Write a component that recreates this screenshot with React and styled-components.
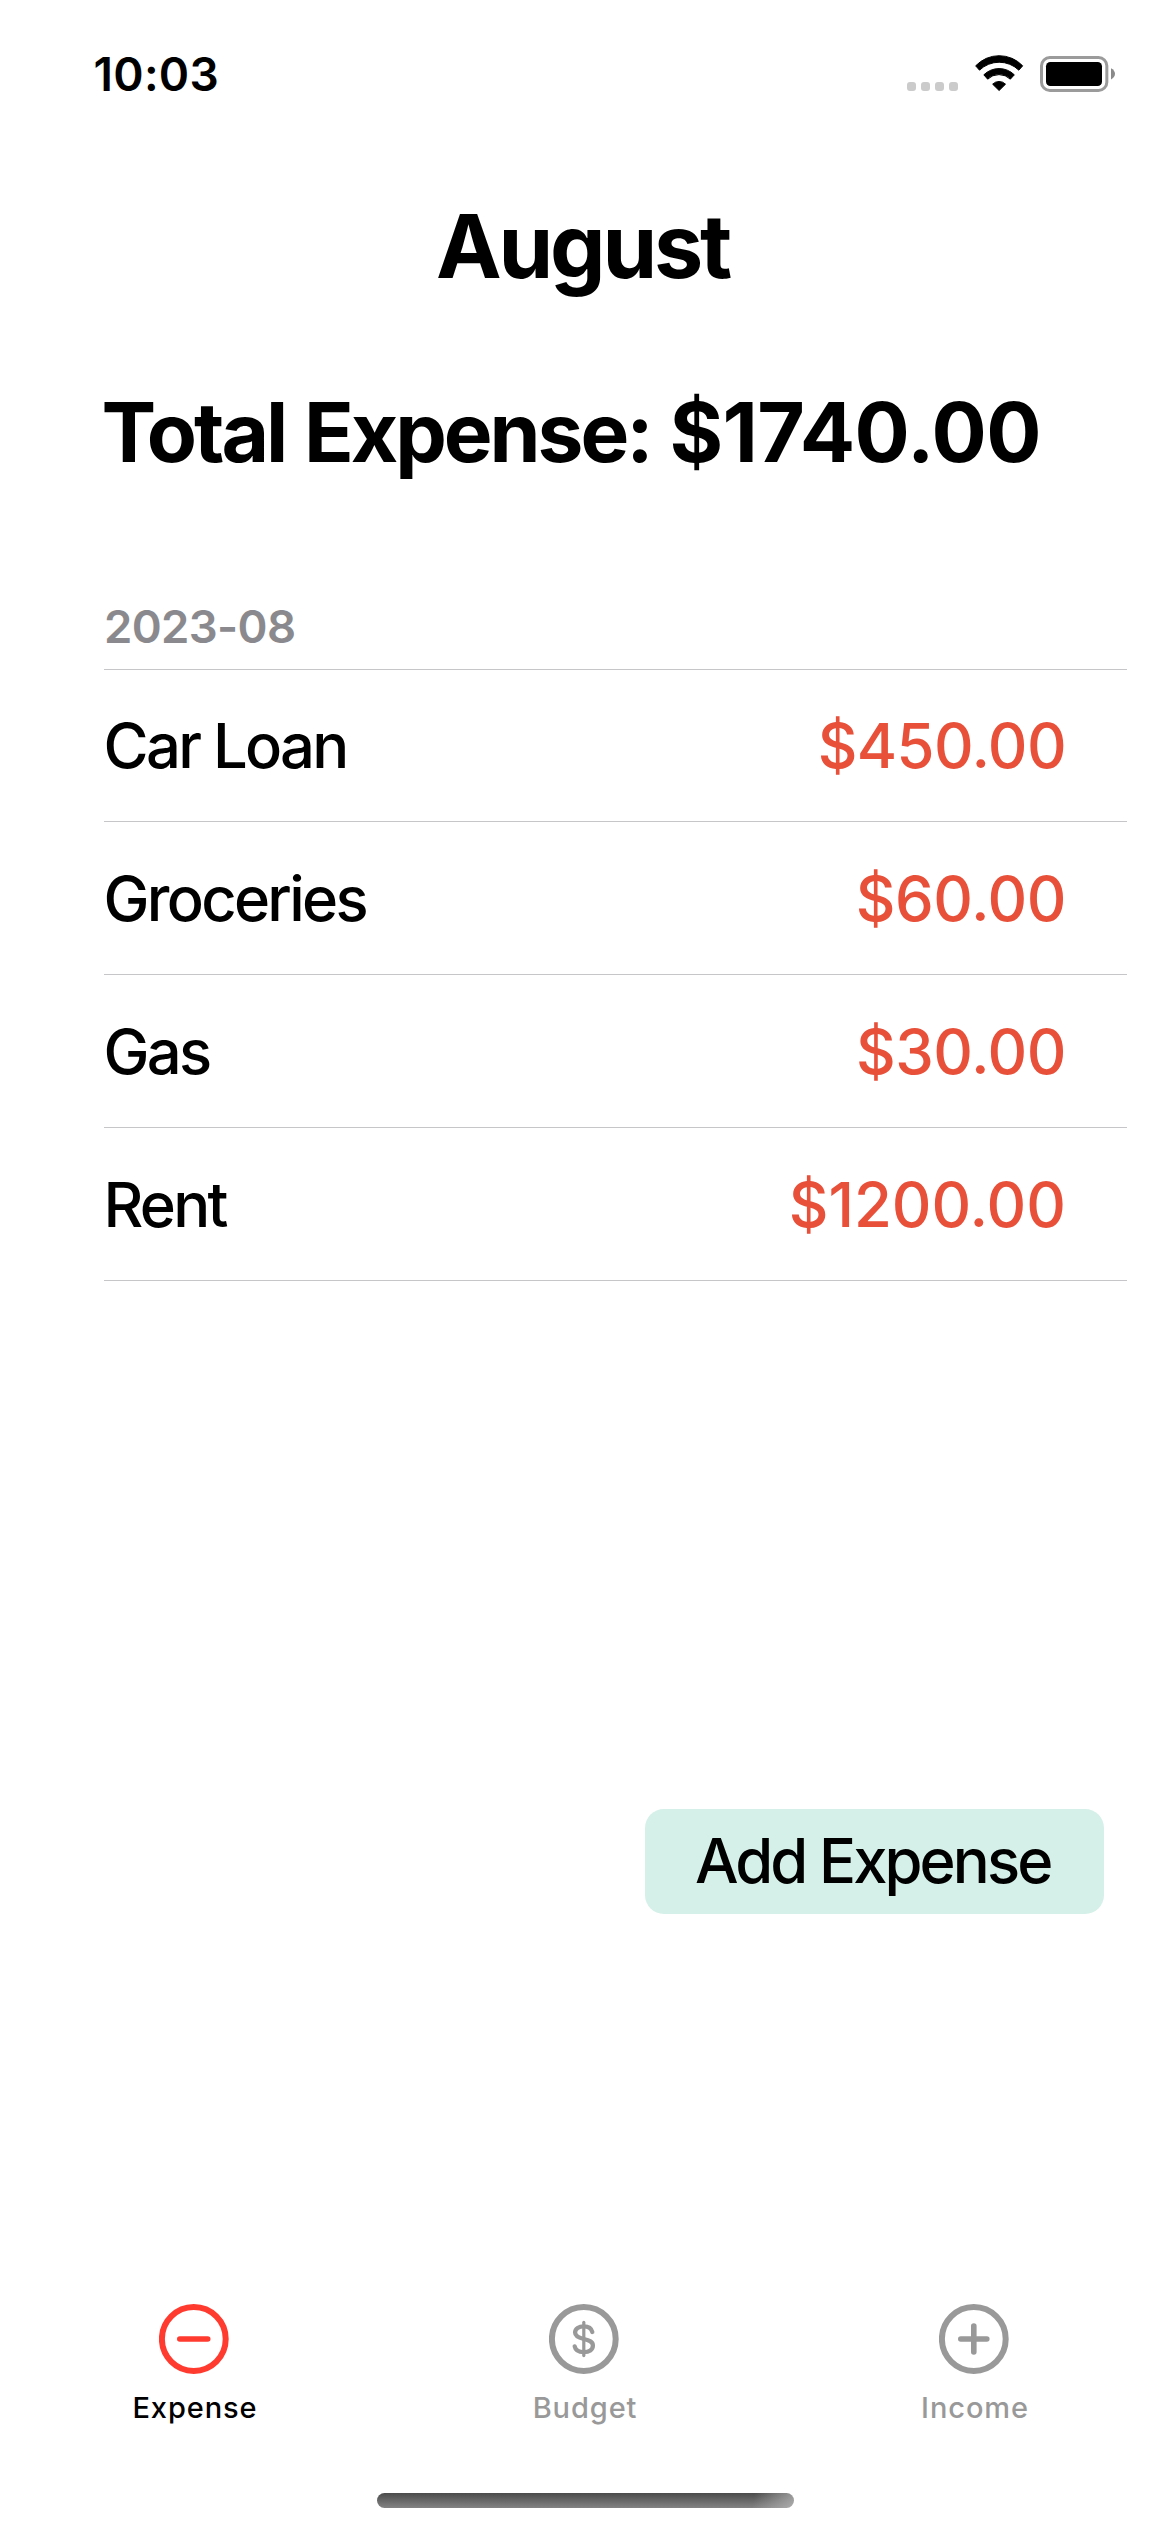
import React from "react";
import styled, { createGlobalStyle } from "styled-components";

const GlobalStyle = createGlobalStyle`
  *, *::before, *::after { box-sizing: border-box; }
  body {
    margin: 0;
    background: #fff;
    color: #000;
    font-family: Inter, "Liberation Sans", sans-serif;
  }
`;

const Screen = styled.div`
  display: flex;
  flex-direction: column;
  width: 1170px;
  height: 2532px;
  overflow: hidden;
  background: #fff;
`;

const StatusBar = styled.header`
  display: flex;
  align-items: center;
  justify-content: space-between;
  height: 148px;
  padding: 0 55px 0 93.5px;
`;

const Clock = styled.time`
  font-size: 46px;
  line-height: 56px;
  font-weight: 600;
  letter-spacing: 0.3px;
`;

const StatusIcons = styled.svg`
  display: block;
  width: 208px;
  height: 38px;
`;

const MonthTitle = styled.h1`
  margin: 0;
  padding-right: 5px;
  font-size: 88px;
  line-height: 196px;
  font-weight: 700;
  letter-spacing: -3.2px;
  text-align: center;
`;

const TotalTitle = styled.h2`
  margin: 0;
  padding-left: 101.5px;
  font-size: 82px;
  line-height: 178px;
  font-weight: 700;
  letter-spacing: -3.05px;
  word-spacing: 2.4px;
  white-space: nowrap;
`;

const TotalAmount = styled.span`
  letter-spacing: -0.55px;
`;

const List = styled.section`
  display: flex;
  flex-direction: column;
  padding: 77px 43px 0 104px;
`;

const ListHeader = styled.h3`
  margin: 0;
  padding-bottom: 14px;
  border-bottom: 1px solid #c6c6c8;
  color: #8a8a8e;
  font-size: 45.5px;
  line-height: 56px;
  font-weight: 600;
  letter-spacing: -0.65px;
`;

const Row = styled.div`
  display: flex;
  align-items: center;
  justify-content: space-between;
  height: 153px;
  padding: 2px 61px 0 0;
  border-bottom: 1px solid #c6c6c8;

  &:first-of-type {
    height: 152px;
    padding-top: 0;
  }
`;

const RowName = styled.span`
  margin-left: -0.5px;
  font-size: 61.5px;
  line-height: 74px;
  font-weight: 500;
  letter-spacing: -2.7px;
`;

const Amount = styled.span`
  color: #e8503a;
  font-size: 61.5px;
  line-height: 74px;
  font-weight: 450;
  letter-spacing: ${({ $tracking }) => $tracking}px;
`;

const Actions = styled.div`
  display: flex;
  flex: 1;
  align-items: flex-start;
  justify-content: flex-end;
  padding: 528px 66px 0 0;
`;

const AddButton = styled.button`
  width: 459px;
  height: 105px;
  padding: 0 0 1px 50px;
  border: 0;
  border-radius: 19px;
  background: #d4f0e8;
  color: #000;
  font-family: inherit;
  font-size: 61.5px;
  line-height: 74px;
  font-weight: 500;
  letter-spacing: -2.9px;
  text-align: left;
  white-space: nowrap;
`;

const TabBar = styled.nav`
  display: grid;
  grid-template-columns: repeat(3, 1fr);
  height: 190px;
`;

const Tab = styled.a`
  display: flex;
  flex-direction: column;
  align-items: center;
  gap: 15px;
  color: ${({ $active }) => ($active ? "#ff3b30" : "#999")};
`;

const TabIcon = styled.svg`
  display: block;
  width: 72px;
  height: 72px;
  fill: none;
  stroke: currentColor;
  stroke-linecap: round;
`;

const TabLabel = styled.span`
  color: ${({ $active }) => ($active ? "#000" : "#999")};
  font-size: 29px;
  line-height: 36px;
  font-weight: 500;
  letter-spacing: 0.9px;
`;

const HomeArea = styled.footer`
  display: flex;
  height: 39px;
  padding-left: 377px;
`;

const HomeIndicator = styled.div`
  width: 417px;
  height: 15px;
  border-radius: 7.5px;
  background:
    linear-gradient(100deg, rgba(190, 190, 190, 0) 90%, rgba(190, 190, 190, 0.7) 100%),
    linear-gradient(180deg, #4b4b4b, #838383);
`;

const expenses = [
  { name: "Car Loan", amount: "$450.00", tracking: -0.6 },
  { name: "Groceries", amount: "$60.00", tracking: -0.45 },
  { name: "Gas", amount: "$30.00", tracking: -0.45 },
  { name: "Rent", amount: "$1200.00", tracking: 0 },
];

const glyphs = {
  minus: <path d="M20.8 36h27.9" strokeWidth="5.6" />,
  dollar: (
    <>
      <path d="M34.8 19.4v33.2" strokeWidth="3.2" />
      <path
        d="M43.3 29C42.4 25.4 39.2 23.4 34.8 23.4C29.9 23.4 26.1 25.8 26.1 29.6C26.1 33.4 29.6 34.8 34.8 36C40.6 37.3 43.9 38.6 43.9 42.6C43.9 46.8 40.2 49.2 34.8 49.2C29.8 49.2 26.4 47 25.7 43.4"
        strokeWidth="4.3"
      />
    </>
  ),
  plus: <path d="M21.8 36h26M34.8 23v26" strokeWidth="5.6" />,
};

const tabs = [
  { label: "Expense", icon: "minus", active: true },
  { label: "Budget", icon: "dollar" },
  { label: "Income", icon: "plus" },
];

function StatusGlyphs() {
  return (
    <StatusIcons viewBox="81 75 624 114" aria-hidden="true">
      {[81, 123, 165, 207].map((x) => (
        <rect key={x} x={x} y="156" width="27" height="27" rx="9" fill="#cbcbcb" />
      ))}
      <g stroke="#000" strokeWidth="3" strokeLinejoin="round">
        <path d="M287 107.500A97 97 0 0 1 428 107.500L416.500 120.500A85 85 0 0 0 298.500 120.500Z" />
        <path d="M311.500 134.500A65 65 0 0 1 403 134.500L391 147.500A49 49 0 0 0 323 147.500Z" />
        <path d="M338 162.500A27 27 0 0 1 376.500 162.500L357.300 181.500Z" />
      </g>
      <rect x="484.500" y="82.500" width="196" height="99" rx="25" fill="none" stroke="#9b9b9b" strokeWidth="9" />
      <rect x="498" y="96" width="168" height="72" rx="13" />
      <path d="M693 114.500C700.500 118 705 124.500 705 131.500C705 138.500 700.500 145 693 148.500Z" fill="#8a8a8a" />
    </StatusIcons>
  );
}

export default function App() {
  return (
    <>
      <GlobalStyle />
      <Screen>
        <StatusBar>
          <Clock>10:03</Clock>
          <StatusGlyphs />
        </StatusBar>
        <MonthTitle>August</MonthTitle>
        <TotalTitle>
          Total Expense: <TotalAmount>$1740.00</TotalAmount>
        </TotalTitle>
        <List>
          <ListHeader>2023-08</ListHeader>
          {expenses.map(({ name, amount, tracking }) => (
            <Row key={name}>
              <RowName>{name}</RowName>
              <Amount $tracking={tracking}>{amount}</Amount>
            </Row>
          ))}
        </List>
        <Actions>
          <AddButton type="button">Add Expense</AddButton>
        </Actions>
        <TabBar>
          {tabs.map(({ label, icon, active }) => (
            <Tab key={label} $active={active}>
              <TabIcon viewBox="0 0 72 72" aria-hidden="true">
                <circle cx="34.8" cy="36" r="31.9" strokeWidth="6" />
                {glyphs[icon]}
              </TabIcon>
              <TabLabel $active={active}>{label}</TabLabel>
            </Tab>
          ))}
        </TabBar>
        <HomeArea>
          <HomeIndicator />
        </HomeArea>
      </Screen>
    </>
  );
}
